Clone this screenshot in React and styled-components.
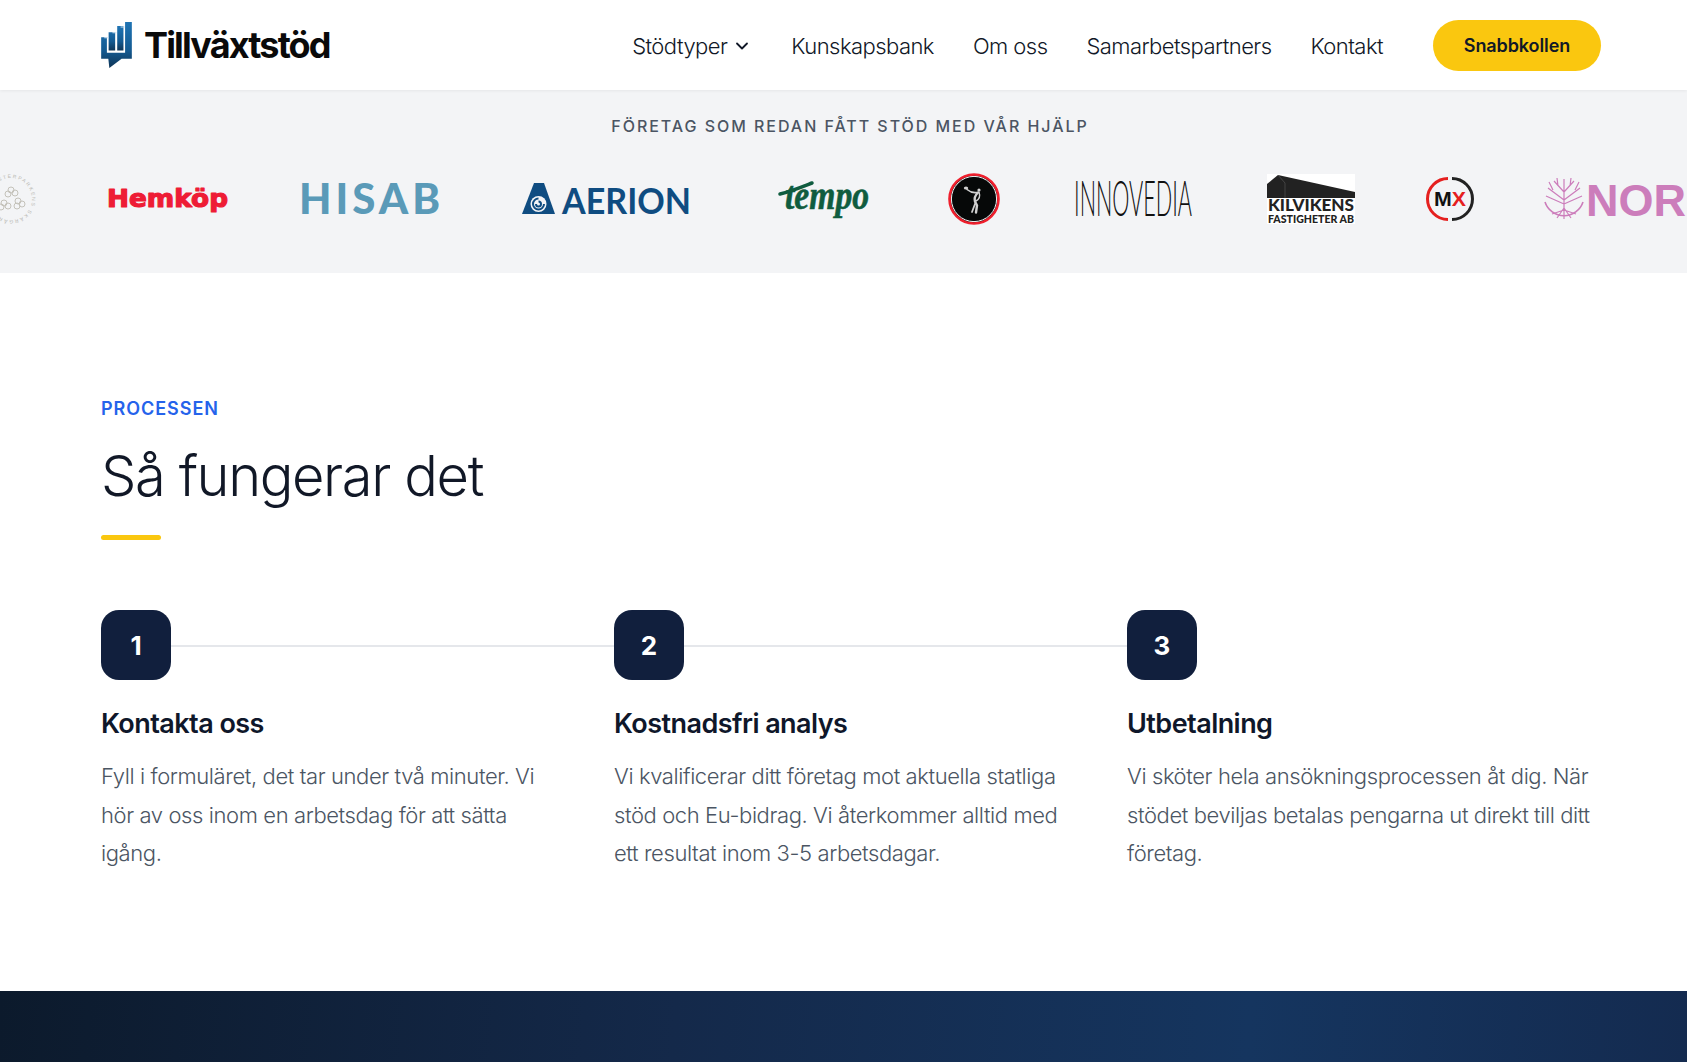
import React from "react";
import styled, { createGlobalStyle } from "styled-components";
import { ChevronDown } from "lucide-react";

// ---------------- STYLED COMPONENTS ----------------

const GlobalStyle = createGlobalStyle`
  html, body {
    margin: 0;
    padding: 0;
    background: #ffffff;
    overflow-x: hidden;
  }
  body {
    font-family: "Inter", "Liberation Sans", sans-serif;
    color: #111827;
  }
`;

const Header = styled.header`
  height: 90px;
  box-sizing: border-box;
  padding: 0 86px 0 101px;
  display: flex;
  align-items: center;
  justify-content: space-between;
  background: #ffffff;
  box-shadow: 0 1px 3px rgba(0, 0, 0, 0.06);
  position: relative;
`;

const Brand = styled.a`
  display: flex;
  align-items: center;
  gap: 12px;
`;

const BrandName = styled.span`
  font-size: 36px;
  font-weight: 700;
  letter-spacing: -1.85px;
  color: #0a0a0a;
`;

const Nav = styled.nav`
  display: flex;
  align-items: center;
  gap: 39px;
`;

const NavLink = styled.a`
  display: flex;
  align-items: center;
  gap: 5px;
  margin-top: 2px;
  font-size: 22px;
  font-weight: 300;
  letter-spacing: -0.55px;
  color: #111827;
`;

const CtaButton = styled.button`
  width: 168px;
  height: 51px;
  margin-left: 11px;
  border: 0;
  border-radius: 26px;
  background: #fac70f;
  font-family: inherit;
  font-size: 18px;
  font-weight: 600;
  letter-spacing: -0.1px;
  color: #111827;
`;

const LogoBand = styled.section`
  height: 183px;
  box-sizing: border-box;
  padding-top: 23px;
  background: #f3f4f6;
  overflow: hidden;
`;

const BandCaption = styled.p`
  margin: 0;
  height: 26px;
  padding-left: 13px;
  line-height: 26px;
  text-align: center;
  font-size: 16px;
  font-weight: 500;
  letter-spacing: 1.96px;
  color: #4b5563;
`;

const LogoTrack = styled.div`
  display: flex;
  align-items: center;
  height: 60px;
  margin-top: 30px;
  transform: translateX(-13px);

  svg {
    overflow: visible;
  }
`;

const LogoSlot = styled.div`
  flex: 0 0 ${(p) => p.$w}px;
  display: flex;
  align-items: center;
`;

const Process = styled.section`
  height: 718px;
  box-sizing: border-box;
  padding: 122px 87px 0 101px;
`;

const Eyebrow = styled.div`
  height: 28px;
  line-height: 28px;
  font-size: 18px;
  font-weight: 600;
  letter-spacing: 0.95px;
  color: #2563eb;
`;

const Heading = styled.h2`
  margin: 18px 0 0;
  height: 70px;
  line-height: 70px;
  font-size: 56px;
  font-weight: 300;
  letter-spacing: -1.4px;
  color: #111827;
`;

const AccentBar = styled.div`
  width: 60px;
  height: 5px;
  margin-top: 24px;
  border-radius: 3px;
  background: #fac70f;
`;

const Steps = styled.div`
  display: grid;
  grid-template-columns: repeat(3, 1fr);
  gap: 40px;
  margin-top: 70px;
`;

const Step = styled.article`
  position: relative;
`;

const StepBadge = styled.div`
  width: 70px;
  height: 70px;
  border-radius: 18px;
  background: #111f3d;
  color: #ffffff;
  display: flex;
  align-items: center;
  justify-content: center;
  font-size: 26px;
  font-weight: 700;
`;

const StepLine = styled.div`
  position: absolute;
  left: 70px;
  top: 35px;
  width: 443px;
  height: 2px;
  background: #e5e7eb;
`;

const StepTitle = styled.h3`
  margin: 25px 0 0;
  height: 40px;
  line-height: 38px;
  font-size: 27px;
  font-weight: 600;
  letter-spacing: -0.55px;
  color: #0f172a;
`;

const StepText = styled.p`
  margin: 12px 0 0;
  max-width: 468px;
  font-size: 22px;
  line-height: 38.5px;
  font-weight: 300;
  letter-spacing: -0.4px;
  color: #4b5563;
`;

const DarkSection = styled.section`
  height: 71px;
  background: linear-gradient(94deg, #0c1a2c 0%, #14294a 40%, #15355f 74%, #142b50 100%);
`;

// ---------------- LOGOS ----------------

const TillvaxtMark = () => (
  <svg width="31" height="46" viewBox="0 0 30 45">
    <defs>
      <linearGradient id="markFill" x1="0" y1="0" x2="0" y2="1">
        <stop offset="0" stopColor="#1f74b4" />
        <stop offset="0.62" stopColor="#145a91" />
        <stop offset="1" stopColor="#0f3556" />
      </linearGradient>
    </defs>
    <path d="M0 15h5.600v15h17.800V0H30v36H20L8 45l-1-9H0z" fill="url(#markFill)" />
    <path d="M7.300 10h6.400v18H7.300zM15.700 4h6.100v24h-6.100z" fill="url(#markFill)" />
    <path d="M3 15.500h4M11 10.500h4M19 5h4" stroke="#cfe3f2" strokeWidth="1" />
  </svg>
);

const BlomsterLogo = () => (
  <svg width="48" height="48" viewBox="0 0 48 48">
    <defs>
      <path id="blomsterRing" d="M24 24m-21 0a21 21 0 1 1 42 0a21 21 0 1 1 -42 0" />
    </defs>
    <text fontFamily="Liberation Sans, sans-serif" fontSize="5" letterSpacing="1.500" fill="#b9b8b2">
      <textPath href="#blomsterRing">BLOMSTERPARKENS SKÄRGÅRDSHOLM</textPath>
    </text>
    <g fill="none" stroke="#c4c2ba" strokeWidth="1">
      <circle cx="24" cy="15" r="3" />
      <circle cx="28" cy="18" r="3" />
      <circle cx="21" cy="19" r="3" />
      <circle cx="17" cy="28" r="3" />
      <circle cx="21" cy="31" r="3" />
      <circle cx="14" cy="32" r="3" />
      <circle cx="31" cy="26" r="3" />
      <circle cx="35" cy="29" r="3" />
      <circle cx="30" cy="31" r="3" />
    </g>
  </svg>
);

const HemkopLogo = () => (
  <svg width="124" height="30" viewBox="0 0 124 30">
    <text
      x="1"
      y="23"
      fontFamily="DejaVu Sans, sans-serif"
      fontWeight="700"
      fontSize="25"
      textLength="121"
      lengthAdjust="spacingAndGlyphs"
      fill="#ee1c35"
      stroke="#ee1c35"
      strokeWidth="1.200"
      strokeLinejoin="round"
    >
      Hemköp
    </text>
  </svg>
);

const HisabLogo = () => (
  <svg width="142" height="32" viewBox="0 0 142 32">
    <text
      x="0"
      y="31"
      fontFamily="Lato, sans-serif"
      fontWeight="900"
      fontSize="42"
      textLength="141"
      lengthAdjust="spacing"
      fill="#5a9ab8"
    >
      HISAB
    </text>
  </svg>
);

const AerionLogo = () => (
  <svg width="170" height="36" viewBox="0 0 170 36">
    <path d="M12 2h10l11 31H0z" fill="#0f4c81" />
    <circle cx="16.500" cy="23" r="8" fill="#f3f4f6" />
    <path
      d="M16.500 17.500a5.500 5.500 0 1 0 5.500 5.500M16.500 20.500a2.500 2.500 0 1 1-2.500 2.500"
      fill="none"
      stroke="#0f4c81"
      strokeWidth="2"
    />
    <text
      x="40"
      y="33"
      fontFamily="Lato, sans-serif"
      fontWeight="700"
      fontSize="36"
      textLength="129"
      lengthAdjust="spacingAndGlyphs"
      fill="#0f4c81"
    >
      AERION
    </text>
  </svg>
);

const TempoLogo = () => (
  <svg width="92" height="38" viewBox="0 0 92 38">
    <path d="M1 14C10 12 20 8 33 3" fill="none" stroke="#0f5c3f" strokeWidth="3.500" strokeLinecap="round" />
    <text
      x="6"
      y="29"
      fontFamily="Liberation Serif, serif"
      fontStyle="italic"
      fontWeight="700"
      fontSize="40"
      textLength="84"
      lengthAdjust="spacingAndGlyphs"
      fill="#0f5c3f"
      stroke="#0f5c3f"
      strokeWidth="0.600"
    >
      tempo
    </text>
  </svg>
);

const DiscusLogo = () => (
  <svg width="52" height="52" viewBox="0 0 52 52">
    <circle cx="26" cy="26" r="24.500" fill="#060808" stroke="#ef1f2d" strokeWidth="2.600" />
    <circle cx="26" cy="26" r="22.600" fill="none" stroke="#f3f4f6" strokeWidth="1" />
    <g fill="none" stroke="#d0d0d0" strokeLinecap="round">
      <ellipse cx="18" cy="15" rx="2.200" ry="1.600" fill="#d0d0d0" stroke="none" />
      <circle cx="31" cy="17" r="1.600" fill="#d0d0d0" stroke="none" />
      <path d="M19 16.500c3 2.500 7 3.500 10 3" strokeWidth="1.600" />
      <path d="M31 19c1 3 1 7-3 9" strokeWidth="1.400" />
      <path d="M30 19.500c-3 3-4 6-3 9l2 4-1 7" strokeWidth="2.400" />
      <path d="M27 31l-3 8" strokeWidth="1.800" />
    </g>
  </svg>
);

const InnovediaLogo = () => (
  <svg width="118" height="38" viewBox="0 0 118 38">
    <text
      x="0"
      y="36"
      fontFamily="Lato, sans-serif"
      fontWeight="300"
      fontSize="50"
      textLength="118"
      lengthAdjust="spacingAndGlyphs"
      fill="#111111"
    >
      INNOVEDIA
    </text>
  </svg>
);

const KilvikensLogo = () => (
  <svg width="88" height="50" viewBox="0 0 88 50">
    <rect width="88" height="50" fill="#ffffff" />
    <path d="M0 10L11 1l77 17v6H0z" fill="#222222" />
    <path d="M11 1l7 8v15" fill="none" stroke="#666666" strokeWidth="0.500" />
    <text x="1" y="37" fontFamily="Lato, sans-serif" fontWeight="900" fontSize="17" textLength="86" lengthAdjust="spacingAndGlyphs" fill="#222222">
      KILVIKENS
    </text>
    <text x="1" y="49" fontFamily="Lato, sans-serif" fontWeight="900" fontSize="12" textLength="86" lengthAdjust="spacingAndGlyphs" fill="#222222">
      FASTIGHETER AB
    </text>
  </svg>
);

const MxLogo = () => (
  <svg width="46" height="46" viewBox="0 0 46 46">
    <path d="M21 2.500A20.500 20.500 0 0 0 21 43.500" fill="none" stroke="#e5201f" strokeWidth="3" />
    <path d="M25 2.500A20.500 20.500 0 0 1 25 43.500" fill="none" stroke="#222222" strokeWidth="3" />
    <text x="7" y="30" fontFamily="Liberation Sans, sans-serif" fontWeight="700" fontSize="21" textLength="32" lengthAdjust="spacingAndGlyphs" fill="#111111">
      M
      <tspan fill="#e5201f">X</tspan>
    </text>
  </svg>
);

const NorsLogo = () => (
  <svg width="150" height="46" viewBox="0 0 150 46">
    <g fill="none" stroke="#cc7dbb" strokeWidth="1.200">
      <path d="M20 38V3M20 16L10 5M20 16L30 5M20 24L4 12M20 24L36 12M20 28L2 20M20 28L38 20M14 10L13 2M26 10L27 2M9 14L5 6M31 14L35 6M20 34L8 38M20 34L32 38M20 32L13 42M20 32L27 42M20 36V43" />
      <path d="M1 26A20 20 0 0 0 39 26" strokeWidth="1.600" />
    </g>
    <text x="42" y="40" fontFamily="Liberation Sans, sans-serif" fontWeight="700" fontSize="45" fill="#cc7dbb">
      NORS
    </text>
  </svg>
);

const logos = [
  { w: 119, Mark: BlomsterLogo },
  { w: 193, Mark: HemkopLogo },
  { w: 223, Mark: HisabLogo },
  { w: 257, Mark: AerionLogo },
  { w: 169, Mark: TempoLogo },
  { w: 126, Mark: DiscusLogo },
  { w: 193, Mark: InnovediaLogo },
  { w: 160, Mark: KilvikensLogo },
  { w: 117, Mark: MxLogo },
  { w: 160, Mark: NorsLogo },
];

const steps = [
  {
    n: 1,
    title: "Kontakta oss",
    text: "Fyll i formuläret, det tar under två minuter. Vi hör av oss inom en arbetsdag för att sätta igång.",
  },
  {
    n: 2,
    title: "Kostnadsfri analys",
    text: "Vi kvalificerar ditt företag mot aktuella statliga stöd och Eu-bidrag. Vi återkommer alltid med ett resultat inom 3-5 arbetsdagar.",
  },
  {
    n: 3,
    title: "Utbetalning",
    text: "Vi sköter hela ansökningsprocessen åt dig. När stödet beviljas betalas pengarna ut direkt till ditt företag.",
  },
];

const App = () => {
  return (
    <>
      <GlobalStyle />
      <Header>
        <Brand>
          <TillvaxtMark />
          <BrandName>Tillväxtstöd</BrandName>
        </Brand>
        <Nav>
          <NavLink>
            Stödtyper <ChevronDown size={20} strokeWidth={2.2} />
          </NavLink>
          <NavLink>Kunskapsbank</NavLink>
          <NavLink>Om oss</NavLink>
          <NavLink>Samarbetspartners</NavLink>
          <NavLink>Kontakt</NavLink>
          <CtaButton>Snabbkollen</CtaButton>
        </Nav>
      </Header>

      <LogoBand>
        <BandCaption>FÖRETAG SOM REDAN FÅTT STÖD MED VÅR HJÄLP</BandCaption>
        <LogoTrack>
          {logos.map(({ w, Mark }, i) => (
            <LogoSlot key={i} $w={w}>
              <Mark />
            </LogoSlot>
          ))}
        </LogoTrack>
      </LogoBand>

      <Process>
        <Eyebrow>PROCESSEN</Eyebrow>
        <Heading>Så fungerar det</Heading>
        <AccentBar />
        <Steps>
          {steps.map((s, i) => (
            <Step key={s.n}>
              <StepBadge>{s.n}</StepBadge>
              {i < steps.length - 1 && <StepLine />}
              <StepTitle>{s.title}</StepTitle>
              <StepText>{s.text}</StepText>
            </Step>
          ))}
        </Steps>
      </Process>

      <DarkSection />
    </>
  );
};

export default App;
